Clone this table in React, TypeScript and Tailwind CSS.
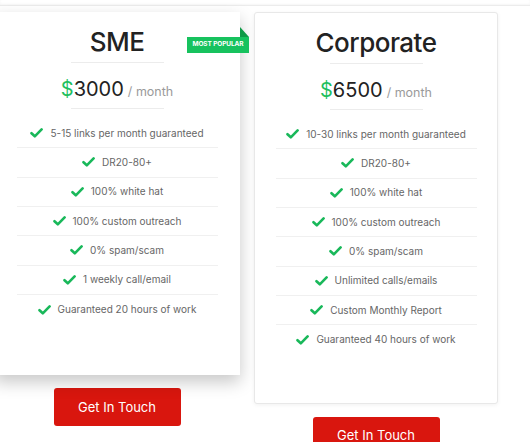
import React from "react";

type Plan = {
  name: string;
  price: string;
  features: string[];
  featured?: boolean;
};

const plans: Plan[] = [
  {
    name: "SME",
    price: "3000",
    featured: true,
    features: [
      "5-15 links per month guaranteed",
      "DR20-80+",
      "100% white hat",
      "100% custom outreach",
      "0% spam/scam",
      "1 weekly call/email",
      "Guaranteed 20 hours of work",
    ],
  },
  {
    name: "Corporate",
    price: "6500",
    features: [
      "10-30 links per month guaranteed",
      "DR20-80+",
      "100% white hat",
      "100% custom outreach",
      "0% spam/scam",
      "Unlimited calls/emails",
      "Custom Monthly Report",
      "Guaranteed 40 hours of work",
    ],
  },
];

function CheckMark() {
  return (
    <svg width="13" height="10" viewBox="0 0 13 10" className="shrink-0">
      <path d="M1.5 5.2 L4.8 8.3 L11.6 1.4" fill="none" stroke="#19b85a" strokeWidth="2.6" strokeLinecap="round" strokeLinejoin="round" />
    </svg>
  );
}

function PlanCard({ plan }: { plan: Plan }) {
  return (
    <div className="flex flex-col items-center">
      <div
        className={
          plan.featured
            ? "relative w-[246px] bg-white pt-[14px] pb-[51px] shadow-[0_7px_16px_rgba(0,0,0,0.22)]"
            : "relative w-[244px] bg-white pt-[14px] pb-[48px] rounded-[3px] border border-[#e8e8e8] shadow-[0_1px_4px_rgba(0,0,0,0.06)]"
        }
      >
        {plan.featured && (
          <div className="absolute top-[15px] right-[-9px]">
            <div className="ml-auto w-0 h-0 border-l-[9px] border-l-[#0f9a47] border-t-[10px] border-t-transparent" />
            <div className="bg-[#17c25e] h-[16px] w-[62px] flex items-center justify-center text-white text-[6.5px] font-bold tracking-[-0.1px]">
              MOST POPULAR
            </div>
          </div>
        )}
        <h2 className="text-center text-[26px] leading-[32px] font-medium text-[#222] tracking-[-0.5px]">
          {plan.name}
        </h2>
        <div className="mx-auto mt-[4px] w-[93px] h-px bg-[#ececec]" />
        <div className="mt-[11px] h-[28px] flex items-baseline justify-center">
          <span className="text-[20px] text-[#1fbf5f]">$</span>
          <span className="text-[20px] text-[#222]">{plan.price}</span>
          <span className="ml-[4px] text-[12.5px] text-[#9a9a9a]">/ month</span>
        </div>
        <div className="mx-auto mt-[6px] w-[93px] h-px bg-[#ececec]" />
        <ul className="mt-[10px] mx-auto w-[201px]">
          {plan.features.map((f, i) => (
            <li
              key={f}
              className={
                "h-[29.33px] flex items-center justify-center gap-[7px] text-[10px] text-[#666] " +
                (i < plan.features.length - 1 ? "border-b border-[#f0f0f0]" : "")
              }
            >
              <CheckMark />
              <span>{f}</span>
            </li>
          ))}
        </ul>
      </div>
      <button className="mt-[13px] w-[127px] h-[38px] rounded-[3px] bg-[#d9160e] text-white text-[13px]">
        Get In Touch
      </button>
    </div>
  );
}

export default function App() {
  return (
    <main
      className="w-[530px] h-[442px] overflow-hidden bg-white"
      style={{ fontFamily: "Inter, 'Noto Sans', sans-serif" }}
    >
      <div className="h-[6px] border-b border-[#ececec] shadow-[0_-1px_2px_rgba(0,0,0,0.04)_inset]" />
      <div className="mt-[6px] -ml-[6px] flex items-start gap-[14px]">
        {plans.map((p) => (
          <PlanCard key={p.name} plan={p} />
        ))}
      </div>
    </main>
  );
}
